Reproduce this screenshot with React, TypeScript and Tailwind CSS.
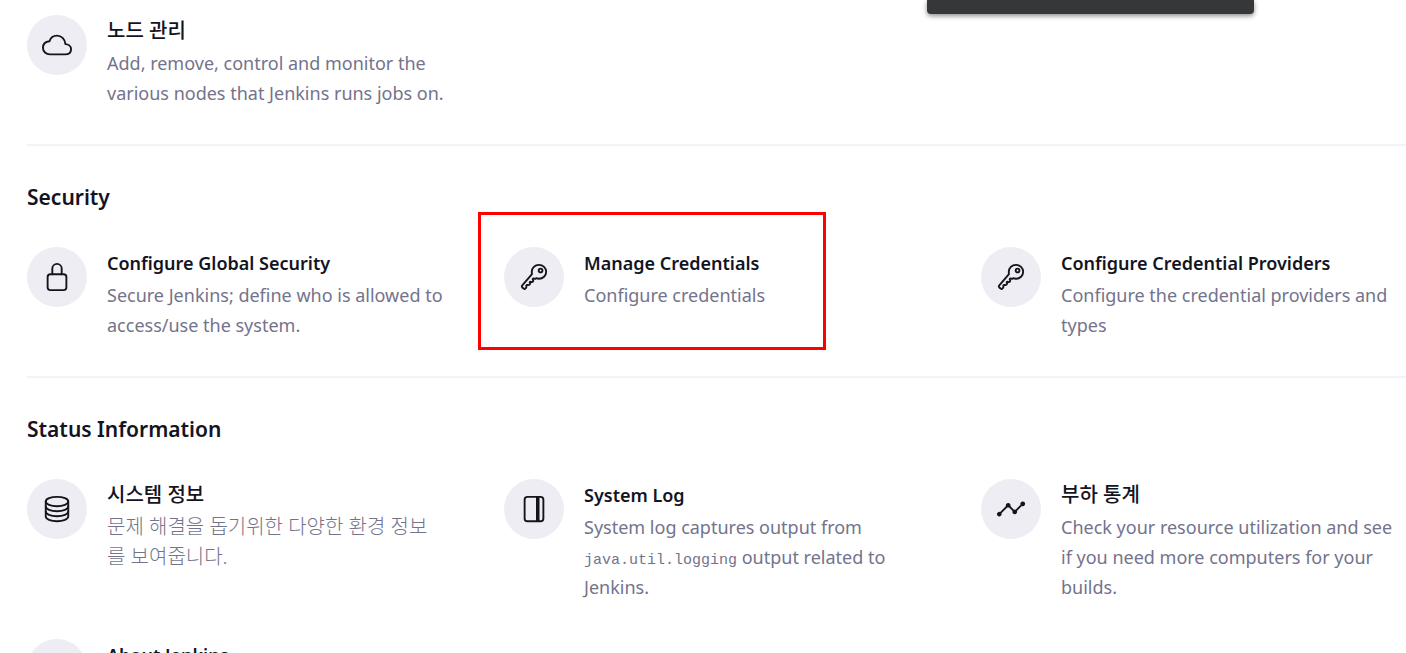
import type { ReactNode } from "react";
import {
  IoAnalytics,
  IoCloudOutline,
  IoJournalOutline,
  IoKeyOutline,
  IoLockClosedOutline,
  IoServerOutline,
} from "react-icons/io5";

type ItemProps = {
  title: string;
  icon?: ReactNode;
  children?: ReactNode;
  highlighted?: boolean;
  korean?: boolean;
};

function Item({ title, icon, children, highlighted, korean }: ItemProps) {
  return (
    <a href="#" className="relative flex items-start gap-5">
      <span className="flex size-[60px] shrink-0 items-center justify-center rounded-full bg-[#ededf3] text-[30px] text-[#14141f]">
        {icon}
      </span>
      <dl className="min-w-0 flex-1 pr-2">
        <dt
          className={
            korean
              ? "mb-px text-[20px] leading-[32px] font-medium"
              : "mb-px text-[18px] leading-[32px] font-semibold"
          }
        >
          {title}
        </dt>
        {children && <dd className="text-[18px] leading-[30px] text-[#73738c]">{children}</dd>}
      </dl>
      {highlighted && (
        <span className="pointer-events-none absolute -top-[35px] right-[103px] -bottom-[10px] -left-[26px] border-3 border-[#ff0000]" />
      )}
    </a>
  );
}

function Section({ title, children }: { title?: string; children: ReactNode }) {
  return (
    <section className="mb-9 border-t-2 border-[#f3f3f8] pt-9 first:border-t-0 first:pt-[15px]">
      {title && <h2 className="mb-[35px] text-[21px] leading-[30px] font-semibold">{title}</h2>}
      <div className="grid grid-cols-3 gap-x-[52px] gap-y-[37px]">{children}</div>
    </section>
  );
}

export default function App() {
  return (
    <div className="relative h-screen overflow-hidden bg-white font-['Noto_Sans','Noto_Sans_CJK_KR',sans-serif] text-[#14141f]">
      <div className="absolute top-0 right-[152px] h-3.5 w-[327px] rounded-b-[4px] bg-[#363739] shadow-[0_2px_5px_rgba(0,0,0,0.45)]" />
      <main className="pl-[27px]">
        <Section>
          <Item title="노드 관리" korean icon={<IoCloudOutline />}>
            Add, remove, control and monitor the various nodes that Jenkins runs jobs on.
          </Item>
        </Section>
        <Section title="Security">
          <Item title="Configure Global Security" icon={<IoLockClosedOutline />}>
            Secure Jenkins; define who is allowed to access/use the system.
          </Item>
          <Item title="Manage Credentials" icon={<IoKeyOutline />} highlighted>
            Configure credentials
          </Item>
          <Item title="Configure Credential Providers" icon={<IoKeyOutline />}>
            Configure the credential providers and types
          </Item>
        </Section>
        <Section title="Status Information">
          <Item title="시스템 정보" korean icon={<IoServerOutline />}>
            <span className="text-[20px] leading-none font-light">
              문제 해결을 돕기위한 다양한 환경 정보를 보여줍니다.
            </span>
          </Item>
          <Item title="System Log" icon={<IoJournalOutline />}>
            System log captures output from{" "}
            <code className="font-['Liberation_Mono',monospace] text-[15px] leading-none">java.util.logging</code>{" "}
            output related to Jenkins.
          </Item>
          <Item title="부하 통계" korean icon={<IoAnalytics />}>
            Check your resource utilization and see if you need more computers for your builds.
          </Item>
          <Item title="About Jenkins" />
        </Section>
      </main>
    </div>
  );
}
